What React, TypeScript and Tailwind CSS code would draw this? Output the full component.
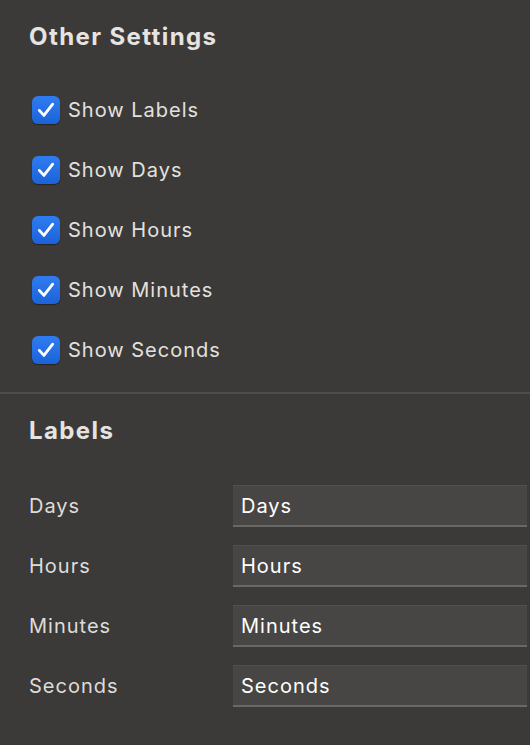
import type { ReactNode } from 'react';

const FONT = { fontFamily: 'Inter, "Noto Sans", "Liberation Sans", sans-serif' };

// ── Checkbox row ──────────────────────────────────────────────────────────────

function CheckRow({ label }: { label: string }) {
  return (
    <div className="flex h-[60px] items-center">
      <div className="ml-[32px] flex h-[28px] w-[28px] items-center justify-center rounded-[6px] bg-gradient-to-b from-[#2f7cf0] to-[#1c62d9] shadow-[0_1px_1px_rgba(0,0,0,0.4)]">
        <svg className="h-[20px] w-[20px]" viewBox="0 0 24 24" fill="none" stroke="white" strokeWidth="3.4" strokeLinecap="round" strokeLinejoin="round">
          <polyline points="4 12.5 9.5 18.5 20 5" />
        </svg>
      </div>
      <span className="ml-[8px] text-[20px] tracking-[1px] text-[#e3e1df]">{label}</span>
    </div>
  );
}

// ── Label row ─────────────────────────────────────────────────────────────────

function LabelRow({ label, value }: { label: string; value: string }) {
  return (
    <div className="flex h-[60px] items-center">
      <span className="w-[233px] shrink-0 pl-[29px] text-[20px] tracking-[1px] text-[#dedcda]">{label}</span>
      <div className="flex h-[42px] w-[294px] shrink-0 items-center border-t border-t-[#524f4d] border-b-2 border-b-[#6a6866] bg-[#484644] pl-[8px]">
        <span className="text-[20px] tracking-[1px] text-white">{value}</span>
      </div>
    </div>
  );
}

function Heading({ children }: { children: ReactNode }) {
  return <h2 className="pl-[29px] text-[24px] font-bold tracking-[1.4px] text-[#e6e4e2]">{children}</h2>;
}

export default function App() {
  return (
    <div className="h-[745px] w-[530px] overflow-hidden bg-[#3c3a38]" style={FONT}>
      <div className="pt-[19px]">
        <Heading>Other Settings</Heading>
      </div>
      <div className="mt-[25px]">
        {['Show Labels', 'Show Days', 'Show Hours', 'Show Minutes', 'Show Seconds'].map((l) => (
          <CheckRow key={l} label={l} />
        ))}
      </div>
      <div className="mt-[12px] h-[2px] bg-[#4f4d4b]" />
      <div className="pt-[19px]">
        <Heading>Labels</Heading>
      </div>
      <div className="mt-[27px]">
        {['Days', 'Hours', 'Minutes', 'Seconds'].map((l) => (
          <LabelRow key={l} label={l} value={l} />
        ))}
      </div>
    </div>
  );
}
